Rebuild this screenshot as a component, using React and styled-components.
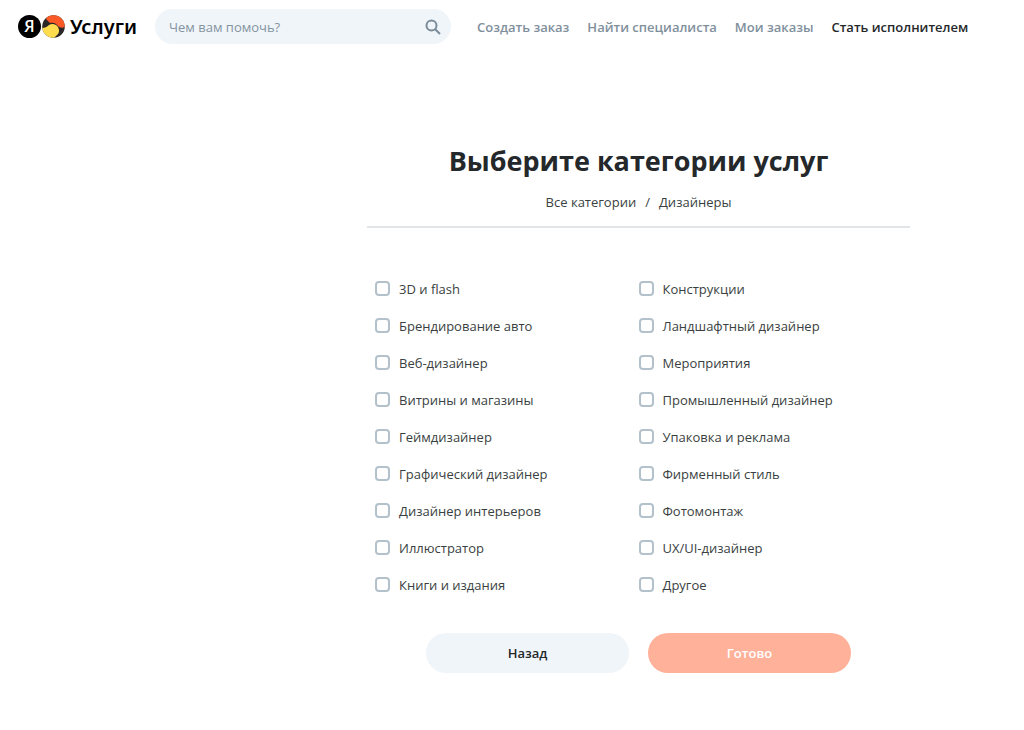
import React, { useState } from "react";
import styled, { createGlobalStyle } from "styled-components";

const categories = [
    "3D и flash",
    "Брендирование авто",
    "Веб-дизайнер",
    "Витрины и магазины",
    "Геймдизайнер",
    "Графический дизайнер",
    "Дизайнер интерьеров",
    "Иллюстратор",
    "Книги и издания",
    "Конструкции",
    "Ландшафтный дизайнер",
    "Мероприятия",
    "Промышленный дизайнер",
    "Упаковка и реклама",
    "Фирменный стиль",
    "Фотомонтаж",
    "UX/UI-дизайнер",
    "Другое",
];

function Logo() {
    return (
        <LogoLink href="#" aria-label="Яндекс Услуги">
            <YaBadge>Я</YaBadge>
            <svg width="23" height="23" viewBox="0 0 23 23" aria-hidden="true">
                <defs>
                    <clipPath id="ball">
                        <circle cx="11.5" cy="11.5" r="11.3" />
                    </clipPath>
                </defs>
                <g clipPath="url(#ball)">
                    <rect width="23" height="23" fill="#2b2627" />
                    <path d="M4 4C5 0 10-1 15 0c5 2 8 6 8 12-3 1-5 1-7-1-2-3-5-4-8-3z" fill="#fb5a26" />
                    <path d="M0 13c3 0 5-1 7-3 3-2 7-1 9 2 2 4 1 7-2 9l-3 3-9-3z" fill="#ffdc4d" />
                </g>
            </svg>
            <LogoText>Услуги</LogoText>
        </LogoLink>
    );
}

function Header() {
    return (
        <Top>
            <Logo />
            <Search role="search" onSubmit={(e) => e.preventDefault()}>
                <SearchInput type="search" placeholder="Чем вам помочь?" aria-label="Чем вам помочь?" />
                <SearchButton type="submit" aria-label="Найти">
                    <svg width="16" height="16" viewBox="0 0 16 16" fill="none" stroke="#7b8c99" strokeWidth="2">
                        <circle cx="6.5" cy="6.5" r="5" />
                        <path d="M10.2 10.2l4.8 4.8" />
                    </svg>
                </SearchButton>
            </Search>
            <Nav>
                <NavLink href="#">Создать заказ</NavLink>
                <NavLink href="#">Найти специалиста</NavLink>
                <NavLink href="#">Мои заказы</NavLink>
                <NavLink href="#" $dark>Стать исполнителем</NavLink>
            </Nav>
        </Top>
    );
}

export default function App() {
    const [selected, setSelected] = useState([]);

    const toggle = (name) => {
        setSelected(selected.includes(name) ? selected.filter((n) => n !== name) : [...selected, name]);
    };

    return (
        <>
            <GlobalStyle />
            <Header />
            <Page>
                <Content onSubmit={(e) => e.preventDefault()}>
                    <Title>Выберите категории услуг</Title>
                    <Crumbs>
                        <Crumb href="#">Все категории</Crumb>
                        <span>/</span>
                        <Crumb href="#">Дизайнеры</Crumb>
                    </Crumbs>
                    <List>
                        {categories.map((name) => (
                            <Item key={name}>
                                <Checkbox
                                    type="checkbox"
                                    checked={selected.includes(name)}
                                    onChange={() => toggle(name)}
                                />
                                {name}
                            </Item>
                        ))}
                    </List>
                    <Buttons>
                        <Button type="button">Назад</Button>
                        <Button type="submit" $primary>Готово</Button>
                    </Buttons>
                </Content>
            </Page>
        </>
    );
}

const GlobalStyle = createGlobalStyle`
    * {
        box-sizing: border-box;
    }
    body {
        margin: 0;
        background: #fff;
        color: #3a3f42;
        font-family: "Open Sans", "Noto Sans", sans-serif;
        font-size: 13px;
        line-height: 20px;
    }
    a {
        color: inherit;
        text-decoration: none;
    }
`;

const Top = styled.header`
    display: flex;
    align-items: center;
    padding: 9px 18px;
`;

const LogoLink = styled.a`
    display: flex;
    align-items: center;
    flex: none;
    gap: 1px;
    width: 137px;
    color: #000;
`;

const YaBadge = styled.span`
    width: 23px;
    height: 23px;
    border-radius: 50%;
    background: #000;
    color: #fff;
    font-size: 16px;
    line-height: 22px;
    font-weight: 600;
    text-align: center;
`;

const LogoText = styled.span`
    margin-left: 4px;
    font-family: "Noto Sans", sans-serif;
    font-size: 20px;
    line-height: 28px;
    font-weight: 600;
`;

const Search = styled.form`
    display: flex;
    align-items: center;
    flex: 0 1 296px;
    height: 35px;
    padding: 0 10px 0 14px;
    border-radius: 18px;
    background: #f0f5fa;
`;

const SearchInput = styled.input`
    flex: 1;
    min-width: 0;
    padding: 0;
    border: none;
    outline: none;
    background: none;
    color: #3a3f42;
    font: inherit;
    &::placeholder {
        color: #8494a0;
        opacity: 1;
    }
`;

const SearchButton = styled.button`
    display: flex;
    padding: 0;
    border: none;
    background: none;
    cursor: pointer;
`;

const Nav = styled.nav`
    display: flex;
    gap: 18px;
    margin-left: 26px;
    white-space: nowrap;
`;

const NavLink = styled.a`
    color: ${(props) => (props.$dark ? "#24282b" : "#7f909c")};
    font-weight: 600;
`;

const Page = styled.main`
    display: grid;
    grid-template-columns: 367fr 543fr 114fr;
    padding: 88px 0 56px;
`;

const Content = styled.form`
    grid-column: 2;
`;

const Title = styled.h1`
    margin: 0;
    color: #24282b;
    font-size: 27px;
    line-height: 40px;
    font-weight: 700;
    text-align: center;
    white-space: nowrap;
`;

const Crumbs = styled.nav`
    display: flex;
    justify-content: center;
    gap: 9px;
    padding: 11px 0 14px;
    border-bottom: 2px solid #e2e5e8;
`;

const Crumb = styled.a`
    &:hover {
        color: #000;
    }
`;

const List = styled.div`
    display: grid;
    grid-template-columns: 1fr 1fr;
    grid-template-rows: repeat(9, 37px);
    grid-auto-flow: column;
    padding: 42px 8px 0;
`;

const Item = styled.label`
    display: flex;
    align-items: center;
    gap: 9px;
    cursor: pointer;
`;

const Checkbox = styled.input`
    appearance: none;
    flex: none;
    width: 15px;
    height: 15px;
    margin: 0;
    border: 2px solid #b3c1cb;
    border-radius: 4px;
    background: #fff;
    cursor: pointer;
    &:checked {
        border-color: #ffb19a;
        background: #ffb19a;
    }
`;

const Buttons = styled.div`
    display: grid;
    grid-template-columns: 1fr 1fr;
    gap: 19px;
    padding: 30px 59px 0;
`;

const Button = styled.button`
    height: 40px;
    border: none;
    border-radius: 20px;
    background: ${(props) => (props.$primary ? "#ffb19a" : "#f0f5fa")};
    color: ${(props) => (props.$primary ? "#fff" : "#24282b")};
    font: inherit;
    font-weight: 600;
    cursor: pointer;
`;
